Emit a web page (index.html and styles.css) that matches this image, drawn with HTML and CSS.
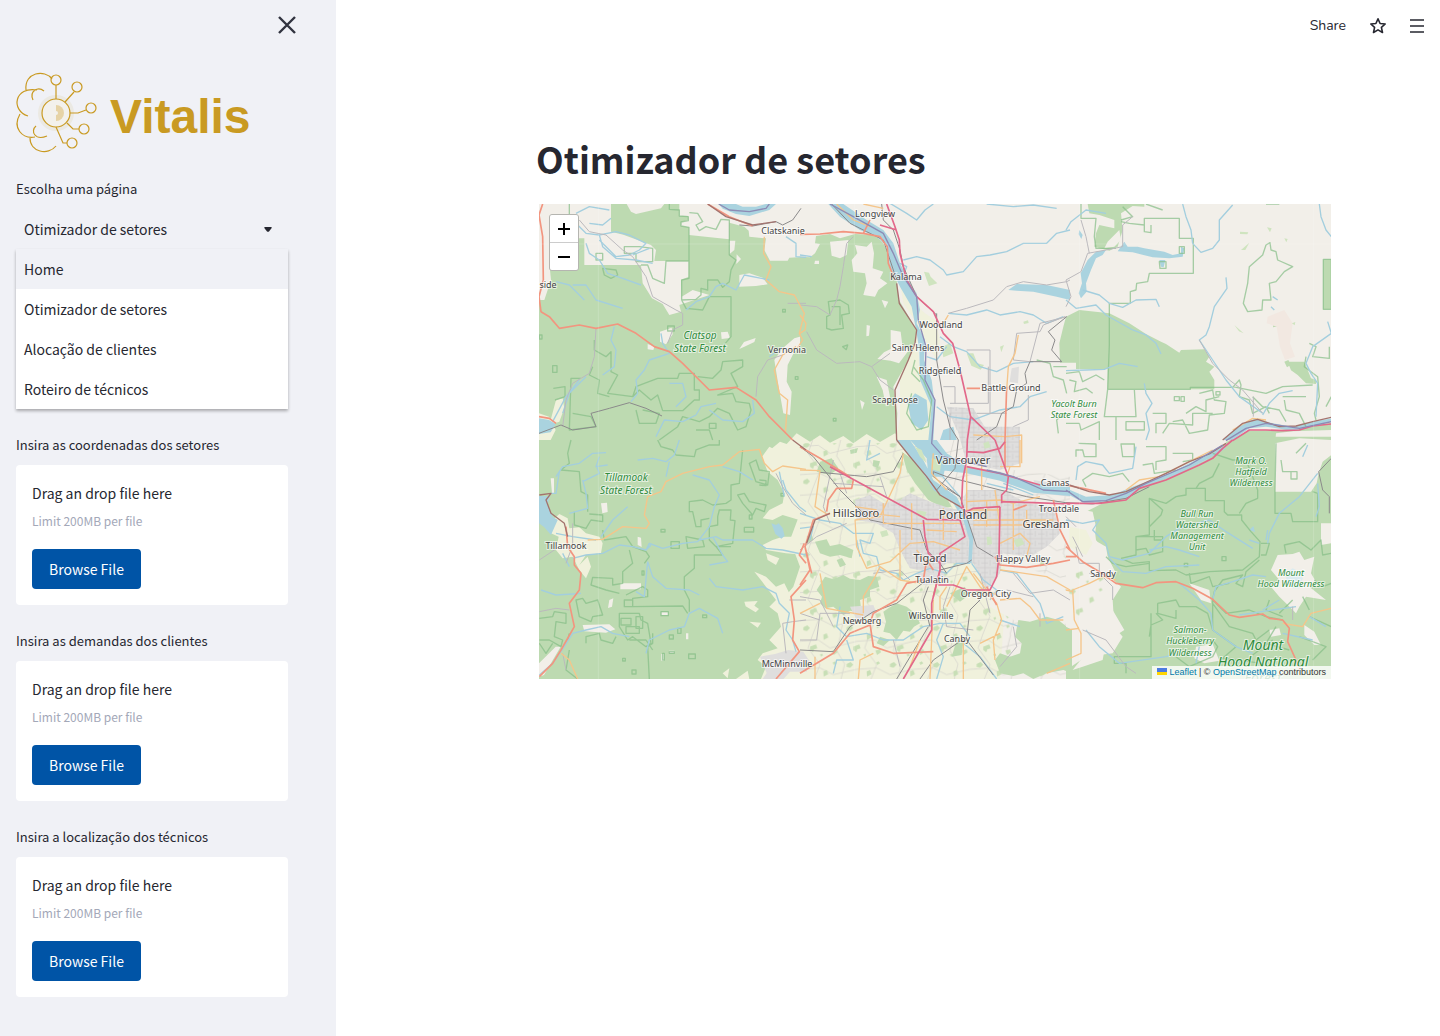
FILE: index.html
```html
<!DOCTYPE html>
<html lang="pt-BR">
<head>
<meta charset="utf-8">
<meta name="viewport" content="width=device-width, initial-scale=1">
<title>Vitalis – Otimizador de setores</title>
<link rel="stylesheet" href="styles.css">
</head>
<body>
<div class="app">
  <aside class="sidebar">
    <div class="sidebar-top">
      <button class="icon-button" type="button" aria-label="Fechar">
        <svg width="18" height="18" viewBox="0 0 18 18" fill="none" stroke="#31333f" stroke-width="2.400"><path d="M1 1 17 17M17 1 1 17"/></svg>
      </button>
    </div>
    <a class="brand" href="#">
      <svg class="brand-mark" viewBox="0 0 82 81" aria-hidden="true" fill="none" stroke="#c99a22" stroke-width="1.200">
        <circle cx="40" cy="41" r="18" fill="#ebe9e3" stroke="none"/>
        <circle cx="40" cy="41" r="14" fill="#f3f1ec"/>
        <path d="M40 33a8 8 0 0 1 0 16z" fill="#e6d3a6" stroke="none"/>
        <circle cx="40" cy="41" r="2" fill="#f3f1ec" stroke="none"/>
        <path d="M36 7C29-3 8 0 10 18M28 19c-6-5-15 0-11 9M21 18C-1 14-6 38 12 44M4 42C-4 56 6 67 19 65M20 54c-6 5-1 15 11 10M14 66c0 14 18 18 26 8M40 13v14M58 20 49 30M70 38l-8 3h-8M51 51l6 6h6M40 55l7 16h4"/>
        <circle cx="40" cy="8" r="5"/><circle cx="61" cy="15" r="5"/><circle cx="75" cy="36" r="5"/><circle cx="68" cy="57" r="5"/><circle cx="56" cy="71" r="5"/>
      </svg>
      <span class="brand-name">Vitalis</span>
    </a>

    <div class="field">
      <label class="label" for="page">Escolha uma página</label>
      <div class="picker">
        <div class="select-wrap">
          <select id="page" class="select">
            <option>Home</option><option selected>Otimizador de setores</option><option>Alocação de clientes</option><option>Roteiro de técnicos</option>
          </select>
          <svg class="caret" width="8" height="5" viewBox="0 0 8 5" aria-hidden="true"><path d="M1 0h6q1 0 .7 1L5 4.400Q4 5 3 4.400L.3 1Q0 0 1 0z" fill="#262730"/></svg>
        </div>
        <div class="menu">
          <button class="option option-active" type="button">Home</button>
          <button class="option" type="button">Otimizador de setores</button>
          <button class="option" type="button">Alocação de clientes</button>
          <button class="option" type="button">Roteiro de técnicos</button>
        </div>
      </div>
    </div>

    <section class="field">
      <h2 class="label">Insira as coordenadas dos setores</h2>
      <div class="card">
        <p class="card-title">Drag an drop file here</p>
        <p class="card-note">Limit 200MB per file</p>
        <button class="browse" type="button">Browse File</button>
      </div>
    </section>
    <section class="field">
      <h2 class="label">Insira as demandas dos clientes</h2>
      <div class="card">
        <p class="card-title">Drag an drop file here</p>
        <p class="card-note">Limit 200MB per file</p>
        <button class="browse" type="button">Browse File</button>
      </div>
    </section>
    <section class="field">
      <h2 class="label">Insira a localização dos técnicos</h2>
      <div class="card">
        <p class="card-title">Drag an drop file here</p>
        <p class="card-note">Limit 200MB per file</p>
        <button class="browse" type="button">Browse File</button>
      </div>
    </section>
  </aside>

  <main class="main">
    <header class="toolbar">
      <button class="share" type="button">Share</button>
      <button class="icon-button" type="button" aria-label="Favoritar">
        <svg width="18" height="18" viewBox="0 0 18 18" fill="none" stroke="#262730" stroke-width="1.600" stroke-linejoin="round"><path d="m9 1.800 2.100 4.700 5.100.5-3.800 3.400 1.100 5.100L9 12.900l-4.500 2.600 1.100-5.100L1.800 7l5.100-.5z"/></svg>
      </button>
      <button class="icon-button" type="button" aria-label="Menu">
        <svg width="14" height="14" viewBox="0 0 14 14" stroke="#262730" stroke-width="1.400"><path d="M0 1h14M0 7h14M0 13h14"/></svg>
      </button>
    </header>
    <div class="content">
      <h1 class="title">Otimizador de setores</h1>
      <div class="map">
        <svg class="map-canvas" viewBox="0 0 792 475" role="img" aria-label="Mapa de Portland e arredores">
          <defs>
            <pattern id="streets" width="34" height="29" patternUnits="userSpaceOnUse"><path d="M0 6h34M11 0v29M0 21h20M26 12v17" fill="none" stroke="#cbc9ca" stroke-width="2"/></pattern>
            <pattern id="lanes" width="170" height="146" patternUnits="userSpaceOnUse"><path d="M0 20 55 16 90 40 170 20M38 0 24 40 60 90 38 146M0 104l60-4 40 20 70-16M122 0l-12 48 24 40-14 58" fill="none" stroke="#d2d1cb" stroke-width="2"/></pattern>
            <pattern id="groves" width="130" height="110" patternUnits="userSpaceOnUse"><path d="M10 12l12-6 8 8-9 9-11-2zM70 34l10-4 5 12-14 8zM30 70l18-7 4 12-10 3-3 9-9-7zM96 82l14-4 3 9-12 8zM98 8l7-4 5 6-8 5zM60 94l6-3 3 5-6 4z" fill="#c8dfb6"/></pattern>
          </defs>
          <g transform="scale(.33333)">
            <!-- land cover -->
            <g transform="translate(783 708)"><path class="farm" d="M300-60 270 60 400 60 360-200 350-330 300-200z"/></g>
            <g transform="translate(-9 -12)">
              <path class="forest" d="M9 12H801V720H9z"/>
              <path class="land" d="M9 12H225V95L262 104 345 135 360 150 355 183H458V230L435 240 437 290 470 270 520 285 430 315 435 335 400 345 380 312 348 295 320 250 315 195H145V115H60V150L40 190 45 240 25 300 9 300z"/>
              <path class="land" d="M272 12H385L375 25 300 42 285 35zM430 12H580V118L459 105V82L435 78 436 66 457 60 456 48 430 48zM580 12H810V170L760 173 755 182 702 182 685 150 690 115 640 110 638 92 625 80 580 68zM580 122 598 122 595 150 580 163zM602 163l13 14-14 15zM610 225l30-5 40 13 15 20-35 5-50 2zM610 447l14-21 35-12-4 12-30 14zM555 397l20-2 7 19-25 3zM335 432l20 8-3 10-17-2zM372 395l35-12 3 20-20 30-18-8zM715 480l25-35 35-30 35-10v20l-35 30-20 40-3 50 15 30-5 70-20-5-14-80z"/>
              <path class="farm" d="M60 600l20-5 5 30-15 40-30 10zM9 640l30 10 20 40-15 30H9z"/>
              <path class="water-fill" d="M9 655l30 5 20 12-15 25-35 5zM548 12H720L700 30 640 48 600 42 560 26z"/>
              <path class="land" d="M600 12H690L660 20 620 20z"/>
            </g>
            <g transform="translate(783 -12)">
              <path class="forest" d="M0 170 30 172 45 160 60 132 45 130 48 108 90 102 120 115 165 102 225 105 250 130 265 160 270 200 290 240 297 300 350 390 345 425 325 480 280 560 292 640 287 740H0z"/>
              <path class="land" d="M165 135 200 140 215 125 222 160 218 205 250 215 240 235 262 250 235 270 225 290 190 285 200 250 195 220 160 215 155 180 172 160zM90 125l55-5-5 45-20 10-25-8zM272 390l30 5 5 40 20 15-30 40-25-8-40-5 20-20 20-10zM200 375l10 2-3 30-8 2zM245 300l20 5-10 20zM230 530l30 10 10 50-12 30-10-50zM180 600l14 8-8 22zM45 182l12 0 0 10-14 0z"/>
              <path class="farm" d="M300 250 340 310 375 340 405 360 420 420 410 480 380 430 350 370 310 310zM340 480 370 540 390 600 400 720 295 720 300 660 330 600z"/>
              <path class="grove" d="M372 215l15 3 5 12 20 20-25 8-8-22zM500 460l20 0 12 30 20 5-10 14-28-12zM600 440l12-5-8 22zM670 365l14-4 2 8-14 3zM425 440l25-10 10 30-30 12z"/>
              <path class="water-fill" d="M85 12 130 12 200 60 250 90 280 130 300 190 325 240 350 280 360 330 350 370 375 420 372 480 395 540 405 620 400 720 385 720 395 620 360 540 358 450 350 400 335 320 300 260 270 200 262 140 230 110 180 90 120 50zM345 580l35 20 5 60-20 30-30-20-12-60zM430 690l30-10 10 40h-50zM625 270 650 252 740 255 810 270 810 300 770 290 700 275 650 272z"/>
            </g>
            <g transform="translate(1581 -12)">
              <path class="forest" d="M-20 430-8 380 0 350 40 330 130 340 190 370 240 402 285 425 300 432 340 458 345 450 415 448 430 470 420 485 445 500 430 515 445 540V568H125V507H30V488L-18 488zM65 12H235V20L200 18 165 40 170 90 155 140 130 152 85 140 90 100 100 75 145 85 145 60 100 45 70 40zM772 178H796V328H772zM665 485l50 0 20 50 15 5 0 12-30-2-25-25-20-14zM622 372l17-4 2 10-20 4zM655 485l12-5 8 14-12 8z"/>
              <path class="peak" d="M605 350l50-20 25 40-8 60 15 40-30 10-15-40-10-60-30-10z"/>
              <path class="land" d="M160 90l5 30-20 20-30 5 10-20z"/>
              <path class="forest" d="M480 726 550 692 640 690 796 668V740H480z"/>
              <path class="land" d="M630 700 680 694 796 690V724H628z"/>
              <path class="water-fill" d="M470 720 520 675 570 655 620 670 680 680 740 665 796 655V665L740 680 680 692 600 680 550 685 500 720zM45 295 38 280 48 250 44 220 65 180 90 155 120 150 110 165 90 175 75 210 60 250 62 275zM175 125l10 15 30 0 20 5 60 10 25 10 25-5 0-20 10 5-5 25-40 5-50-3-60-15-45-3zM280 180l18 0-5 22-8-2zM40 90l10 15-4 12-8-14z"/>
              <path class="lime" d="M522 95l25 2-3 6-22-1zM525 150l25-22-12 22zM655 115l10 2-4 10zM603 82l14 3-5 12zM505 375l28 25-14-6zM678 370l10-4-2 10z"/>
            </g>
            <g transform="translate(-9 708)">
              <path class="forest" d="M9 0H801V717H9z"/>
              <path class="farm" d="M700 20 720 30 740 80 810 95V345L750 340 690 330 680 315 710 300 740 290 780 290 790 240 740 225 710 240 680 235 700 210 740 190 745 160 725 120 695 95 678 50zM655 395 690 410 720 440 745 430 760 460 780 440 810 420V717H675L690 680 665 660 680 640 725 625 700 600 735 560 725 520 700 500 720 480 690 440zM625 485l40-2-10 14 14 10-10 10-30-18zM690 340l40 15-10 20-25-15zM560 700l20-15-5 30zM600 717l35-25 5 25zM640 545l35 3-10 15zM50 240 70 222 95 235 100 265 130 262 150 280 190 290 200 310 195 340 150 345 130 375 155 350 165 380 150 415 130 390 110 350 80 355 60 330 68 290 45 280z"/>
              <path class="land" d="M44 115h10v45h-6zM195 190l18-2 2 28-16 4zM305 290l10 3 2 28-12-6zM253 430h62v18h-62zM220 480l12-5-4 25-12 4zM140 555l80-2 18 15-28 10-65-4zM376 642h8v20h-8zM399 632h16v6h-16zM450 580h7v18h-7zM376 517h20v8h-20zM9 670l50-50 15 0-50 85-15 5z"/>
              <path class="water-fill" d="M9 168H42L35 195 50 230 65 240 45 285 25 262 9 250zM706 250l14 5 8-5 12 14 6 24-10 8-18-14z"/>
            </g>
            <g transform="translate(783 708)">
              <path class="farm" d="M-90 30-60 5-40 12-10-20 30 5 60-14 90 8 130-12 160 10 200-18 240 6 285-20 350 30 430 150 560 220 620 400 600 720-30 720-10 640-60 600-20 540-70 500-20 440 0 380-30 300 0 220-40 180-10 110-70 90z"/>
              <path class="stone" d="M-120 650l45-8 40-12 45 5 20 30-10 30-50 0-30 34h-60l20-30z"/>
              <path class="lanes" d="M0 0H810V717H0z"/>
              <path class="groves" d="M0 10H300L400 180 300 230 0 150zM120 350H810V717H0V300z"/>
              <path class="land" d="M560 400l100-20 110 30 40 60v60l-150 20-90-50zM580 0h230v110L640 90z"/>
              <path class="forest" d="M305 35 345 62 370 100 400 145 440 175 455 200 430 205 385 180 345 130 320 90zM45 305 80 298 90 318 120 312 160 330 155 355 120 345 90 350 60 340zM75 410 100 418 130 405 150 416 180 420 205 408 230 410 238 440 210 450 210 470 180 480 185 520 150 512 130 525 100 500 76 505 60 490 66 470 50 450zM250 515 265 505 290 490 320 500 345 520 360 550 342 560 330 575 310 572 290 600 270 580 250 575 258 545zM655 540 690 545 740 530 775 540 800 560 816 566 816 700 790 690 740 700 700 717 670 700 640 708 600 700 585 660 600 640 630 650 660 640 665 610 645 590zM450 460l45-20 5 30-20 15zM60 65l35-10 20 30-25 20-40-10zM470 600l20 5-5 40-30 5zM20 290l14-10 6 20-16 8zM240 590l30 10-20 18-20-8zM110 360l16-6 12 20-18 8zM150 30l24-6-4 14-18 4zM220 60l20 4-6 20-16-6z"/>
              <path class="stone" d="M165 180 210 165 250 190 300 180 330 160 390 185 450 205 480 210 500 150 610 150 680 190 760 200 780 280 740 320 690 350 610 340 600 400 560 450 520 370 440 370 400 400 330 385 300 330 280 280 230 250 170 240zM470-40H660V70L600 90 500 70zM440-100 520-95 560-30 500 0 470-30zM150 500l70-5 10 25-60 20zM350 400l80-10 10 40-70 5zM635-215l22-5-3 50-25-5zM700 120l60 10 50 20v20l-90-10z"/>
              <path class="streets" d="M165 180 210 165 250 190 300 180 330 160 390 185 450 205 480 210 500 150 610 150 680 190 760 200 780 280 740 320 690 350 610 340 600 400 560 450 520 370 440 370 400 400 330 385 300 330 280 280 230 250 170 240zM470-40H660V70L600 90 500 70zM440-100 520-95 560-30 500 0 470-30z"/>
              <path class="grove" d="M240 275l20-5 6 16-20 6zM350 210l30 6-6 16-24-4zM640 300l24-6 10 18-24 10zM560 290l14 0 2 22-14 4zM700 240l22-4 0 16-20 4zM550 10l16-6 6 18-18 4z"/>
              <path class="water-fill" d="M290 0 330 0 370 60 400 120 470 170 500 230 520 290 515 370 505 368 508 300 490 240 460 190 400 150 370 100zM330 0 410 0 440 40 500 80 600 95 700 130 810 140V168L700 158 600 122 500 100 420 90 385 60zM380 50 440 60 430 110 385 110z"/>
              <path class="grove" d="M395 55 425 62 420 95 395 88zM345 20 365 30 380 70 360 50z"/>
            </g>
            <g transform="translate(1581 708)">
              <path class="forest" d="M480 10 550-10H796V717H0V690L60 650 140 640 170 590 145 560 140 480 165 440 120 400 125 350 90 300 80 220 60 215 200 145 260 125 320 105 420 60z"/>
              <path class="land" d="M627 10 700-5 796 0V45L770 65 758 100 752 130 735 155H627zM0 200 80 215 90 260 85 300 120 320 125 350 150 400 110 412 80 430 60 450 80 500 140 510 175 570 120 605 110 660 50 680 20 690 60 640 50 600 20 570 0 560zM635 345 680 342 700 335 715 360 745 350 735 400 750 425 730 440 780 480 720 470 700 500 690 520 660 490 640 470 615 440 640 420 615 390zM765 250l30 0 0 60-30 5zM610 570l30-5 5 20-30 5zM715 555l30 20 20 40-20 0-30-30zM390 620l50-8 20 50-45 8-30-15zM370 430l60 20 5 40-30-10z"/>
              <path class="farm" d="M10 260 60 270 80 310 60 345 10 320z"/>
              <path class="groves" d="M0 390H170L100 500 0 560z"/>
              <path class="snow" d="M660 400l20-15 20 10 10 20-10 30-20 0-20-20z"/>
              <path class="water-fill" d="M0 145 60 170 140 165 200 140 300 105 400 55 470 15 480 25 420 60 330 105 230 140 180 175 60 192 0 160zM550 270l12-12 5 18z"/>
            </g>

            <!-- protected-area outlines -->
            <g class="bound">
              <g transform="translate(-9 -12)"><path d="M400 12V28L430 30V48L457 50V62L435 66V78L459 82V235L437 240V300L480 298 495 285V265L515 270V240H545L560 262 580 245 585 210 600 180 580 165V60L555 58 540 88 510 80 490 92 480 75 500 65 485 40 460 38M459 183H390L385 250 350 235 335 195H315M265 140H310L350 145V185H300V160H265zM437 300 450 325 500 330 520 290H585V410L560 440 520 450M200 205l40 5 5 15-20 10-20-10zM180 160h20v20h-20zM175 420V450L210 470 225 455V515L245 525 215 580 290 590 300 560 325 550 365 535 425 535 430 520H475V570H490V600H475L440 632H380L365 585 345 600 310 570 290 590M485 530 530 535 555 510 560 485 620 480V500L585 520 605 560 545 585 590 580 600 605 640 610 645 630 630 680 605 690 580 640 545 625 520 650 490 665 440 650 425 680 370 720M170 500 160 525 190 540 185 580 220 590M50 497h13v20h-13zM52 565l35-5v30l-30 10M135 535H105L100 690 180 680 165 650 110 640M395 378l20 0 0 15-20 0zM300 630l10 40 50 0 10-30-50-10M480 690h40l10 30M100 12v60l20 30-40 10M520 670h20v15h-20zM740 328h8v8h-8zM778 530h8v8h-8zM10 405h8v12h-8z"/></g>
              <g transform="translate(783 -12)"><path d="M85 305 120 300 145 315 148 340 125 345 130 385 95 390 80 385V350L90 345zM95 320H120V375M128 440l15-5-4 14zM100 655l8 0 0 8-8 0zM340 500 370 540 395 600 385 680 350 690 320 640 335 580M345 480 335 520 360 545M710 480 750 490 760 530 790 540 800 580M760 500H800M790 640 770 660 775 700"/></g>
              <g transform="translate(1581 -12)"><path d="M45 12V55H90L85 110 90 145H150M165 65 190 70 235 75V55H340V115H382V220H250L245 245 212 250 210 270 193 275V310H130V435L125 568H373V562H500L520 540 525 555 520 590 550 600 560 640 600 620 610 640M235 75 235 95 255 98V75M340 140h15v20h-15zM280 185l20 0 0 20-18 0zM600 135 612 128 615 150 630 155 635 180 680 200 655 215 630 245 610 250 615 300 590 300 588 330 545 335 532 310 545 250 550 200 590 165zM125 568 115 650H210L205 568M0 520 40 515 50 545 90 525 115 540M10 540 30 545 25 575 60 565 80 580M0 670H40L45 690 100 665V720M180 665h55v25h-55zM150 650v70M325 590h15v12h-15zM345 590h10v14h-10zM260 640h40v30h-30v30M290 700l20-30 70 5V640H440M360 640l30-20 30 15V600L460 590M400 580 440 570 445 600 480 605 475 640 430 645 425 690 370 700 350 660 320 665M450 575h12v10h-12zM500 560 600 580 650 560 740 555M650 590H720M655 600 660 630 700 640 720 680M730 430 750 440 740 470 790 475V440M720 470 715 500 755 530 760 590 745 640 750 660M560 590 590 620 640 630 660 665M240 12 290 30M170 20 200 50 165 60M772 178H796V328H772zM600 12H640M780 620 796 590"/></g>
              <g transform="translate(-9 708)"><path d="M105 0 95 40 100 70 75 90 130 95 135 155 155 165V215M365 0 375 20 410 30 420 45 475 50 480 30 520 15 550 15V0M620 30 610 130 585 135V180L570 190 530 195 500 180 460 185V215H470L480 260H495V240L520 235M545 230 550 210H585L583 240 597 242 590 310 540 320 520 300V260L545 255zM605 165 625 160 640 185 690 195 685 215 660 205 650 225 620 190zM640 225h8v12h-8zM625 262h28v14h-28zM640 70 660 60 670 90 700 95 695 135 660 125zM585 320H540L560 345H475V385L445 410V450L460 480V515M405 305h25v20h-25zM450 290 500 300 505 320 455 325zM115 215V255L150 265 165 240 200 245V225L160 222M200 270 205 300 270 290 290 320 330 335 340 350 325 370M280 330 290 370 260 395V430L230 435V415L170 412 165 435 210 450 250 460M270 465 320 440 335 450V470L290 475V500L440 498 455 520M375 515h22v12h-22zM265 480h25v20h-25zM120 480 140 475 150 490 185 480 200 525 170 530 165 545 130 530zM250 520H310L315 540 335 550 345 610 330 620 290 590 275 600 250 560zM255 535h30v20h-30zM270 560h40v20h-40zM300 530h20v35h-20zM280 600H330L350 630M350 580V610L335 620 340 717M240 590 230 610 195 600 190 580 150 590V610M100 580 95 600M10 535 50 530 55 515 90 520V550L60 545 55 590 80 600 75 620 40 600H10M10 610 30 640 50 610M380 640h5v20h-5zM400 635h15v5h-15zM458 642h20v14h-20zM500 525h12v8h-12zM288 690h12v12h-12zM260 655h8v8h-8zM318 393h6v12h-6zM400 585h12v12h-12zM735 160h8v8h-8zM670 120l20 2 0 15-20-2M100 630 90 690 125 717M425 565h10v15h-10zM375 268h12v8h-12z"/></g>
              <g transform="translate(1581 708)"><path d="M38 10 90 12V50H55L50 30H30V50M165 12H205V50H170zM240 20H300V60L270 65V90M230 75 260 70 265 100 330 90M320 40H380V60L350 65M60 140 50 120 80 100 130 110 170 100 190 125M165 355 210 345V290L250 285V175L290 210 285 225 250 260M250 175 300 190 330 170 360 165V145H418V182H475V215L485 225H527V240L555 275 582 305 580 350 530 390 430 395 360 405 330 390 250 392V365L200 370 165 355M210 290H290V335L250 345 240 325 210 330M290 300H265V270M355 370h10v10h-10zM468 350h12v12h-12zM630 10 627 150V220H675L680 245H755V160L740 155M645 60 650 95H675M675 95h18v22h-18zM690 40 720 10M520 220 540 190 575 175V150L560 110 540 60 500 60 440 40M460 70 440 110 400 130 390 145M660 340 655 315 700 305 735 330 765 300 770 345 796 340M585 345H600L610 310H585M580 360 540 395 530 440 510 430 530 405 470 420 445 455 440 480 480 520 550 510 600 530 650 540M370 400 375 430 430 410 440 440 490 430M440 480V570L510 620 470 655 590 670M440 490 490 560 560 580 570 600 610 570M275 490 330 480 340 500 390 500 425 520 440 570M275 490V520L330 535V510M255 520V650H145V670H180V700M250 590 255 555 290 540 270 520M330 650 370 680 440 650 455 620 440 600M610 480 600 510 650 530M730 530 796 560M680 480 640 520M710 470 730 510M630 560 600 610 670 630M700 590 780 620 740 660M120 350 140 370 180 380 250 370M560 645 620 600M745 420 770 440 796 430"/></g>
            </g>

            <!-- rivers -->
            <g class="river">
              <g transform="translate(-9 -12)"><path d="M120 70 150 100 190 105 240 95 280 105 330 130 310 150 280 165 240 170 190 120M150 130 160 160 190 180 215 220 260 235 315 255M190 105 200 140 240 175 300 180 350 190M290 165 340 145M60 245 100 255 145 300M110 255 150 255 180 300 260 325M160 70 200 75 225 55M120 40l40-20 60 10M750 110 780 130V170L810 172M450 330 480 305 520 290 540 260 560 250 600 270 625 225 700 240M375 400 380 430 400 460 340 480 325 510 300 540 305 580 285 605M235 380 225 420 240 450 235 500 200 525M400 550 440 550 450 590 420 620M360 710 385 660 440 665 480 645 495 620 540 610M520 630 560 660 620 665 655 640 650 600M80 640 100 580 150 530M50 665 90 590 130 540M700 470 740 440"/></g>
              <g transform="translate(783 -12)"><path d="M270 10 320 40 350 60 375 30 400 12M310 180 350 170 390 180 430 210 440 225 490 215 530 170 570 165 620 155 670 130 740 130 770 100 810 90M560 12 640 20 700 15 770 25M445 340 500 345 560 330 600 345 660 335 700 345 740 370 790 350M420 410 460 440 500 455 540 500 590 515 640 490 700 485M410 620 450 650 520 660 600 630 660 620 690 590 740 575M380 470 410 480 440 440M300 190 320 200 305 240M0 165 35 170"/></g>
              <g transform="translate(1581 -12)"><path d="M0 90 15 65 60 30 120 40M350 12 360 50 375 90 380 130 405 157 440 145 460 120V60L500 15M760 12 765 50 780 90 796 110M50 270 100 285 130 310 170 322 210 300 270 298 280 320M0 300 30 325 90 315 120 345 200 390 240 405 270 430 285 462M480 232 483 265 445 320 430 380 420 405 400 420 440 480 480 540 520 590 590 640M0 512 60 510 115 508 160 490 215 500M235 550 240 580 258 610 240 640 250 690 240 720M590 645 610 610 640 580 680 572M796 400 740 440 720 490 735 520 755 550 750 650M785 365 796 400M620 290 635 300M615 320 625 330"/></g>
              <g transform="translate(-9 708)"><path d="M60 110 80 80 130 70 170 40 210 38M70 95 60 160 45 160M190 50 180 80 215 75M140 120 150 160 155 205 100 220M180 75 190 100 140 125M305 60 350 55 390 65 415 45 430 0M400 65 390 110M470 105 520 120 550 165 535 200 520 260 485 305 440 310 380 325 340 310 330 330 290 320 250 315 200 340 150 345 110 355M560 80 610 95 650 120M490 300 540 290 560 300 650 300 690 325 740 330 810 345M530 290 560 345 575 365 520 375M335 365 325 470 300 455M335 365 350 410 390 445 460 450 490 465M520 415 540 440 620 450 680 440 720 460 730 490 760 520 750 570 770 600 780 635M560 580 545 535 490 505 460 520 445 560 400 570 340 600 330 640M280 590 230 580 195 560 150 570 110 580 85 620 50 670 10 705M15 450 60 465 110 462 135 460M60 280 110 290 180 300M80 340 100 380M740 120 750 150 790 200 810 215M275 200 230 240 195 290M330 330 345 315M730 95 745 170"/></g>
              <g transform="translate(783 708)"><path d="M0 220 60 240 120 250 160 280 220 280 210 310 180 300 190 340 230 350 240 390 290 400 310 420 350 400 390 385 440 400 470 370 510 370M0 265 40 260 30 300M560 130 640 150M515 370 550 420 590 450 570 480M600 390 650 400 680 440 720 490 740 550 790 530M120 500 110 560 140 590 200 580 250 600 310 600 370 560 420 550 480 550 510 590M140 600 160 660 110 660 100 700M430 550 410 600 430 650 410 717M490 610 540 650 590 717M610 130 700 165M180 350 170 300M210 0 200 60 240 40M420 100 480 170M600 540 660 560"/></g>
              <g transform="translate(1581 708)"><path d="M30 120 35 80 60 65 110 75 130 100 200 85 210 20M0 240 50 250 100 240 80 270 120 310 130 350 170 360 250 340 300 290 340 265 430 240 480 275 560 325M250 330 300 320 340 330 400 350M130 355 170 395 240 400 300 380 400 375M340 430 400 480 435 520 440 570M440 480 450 440 500 425 560 405 600 410M755 130 760 200 750 230M605 310 610 280 640 220 700 170 755 100M550 300 580 310M710 50 725 15M60 570 100 620 160 670 300 650 330 640M440 570 510 620 560 640M690 500 620 510 520 525M590 510 640 480M600 300l5-30M650 580 740 600M400 620 390 670M730 530 780 560"/></g>
            </g>

            <!-- railways and minor roads -->
            <g class="minor">
              <g transform="translate(-9 -12)"><path d="M130 60 160 95 210 105 260 150 290 170 330 230 350 290 420 330 440 340 440 375 410 390 395 430M180 385 175 470 160 520 110 550 90 600 80 680M660 590 665 530 695 480 740 465 780 440M755 310H810"/></g>
              <g transform="translate(783 -12)"><path d="M160 110 140 130 130 200 120 260 110 300 90 345 50 320 0 315M20 395 50 450 110 490 180 485 215 500 270 460M215 500 240 540 280 570M445 340 500 325 580 300 620 260 670 245 740 255 800 245 810 240M795 350 730 375 720 395 650 400 640 480 690 485 720 370 800 350M500 450H570V640M565 500V610H450M430 560H465V610M685 585V660L640 680M530 640H620M450 640V720"/></g>
              <g transform="translate(1581 -12)"><path d="M0 320 15 290 0 240 45 215 65 160 120 150 170 140M200 50 170 75V140M45 60 60 110 70 160M400 420 440 490 490 540 530 570 590 640M562 590V650"/></g>
              <g transform="translate(-9 708)"><path d="M10 515 60 505 100 510M90 690 80 640M110 250V320M10 360 70 320M740 550 750 640M740 550 770 545 810 540M720 100 740 140 770 190 810 225M105 330 90 370M760 480H810"/></g>
              <g transform="translate(783 708)"><path d="M0 470 60 480 100 560M0 600H50L60 520 150 520M220 400 300 390 330 420M450 440 430 500 440 560 520 570M640 560 650 620 600 680M0 520 60 540M540 400 570 520M280 600 300 680M640 400 690 460 760 450 810 480M100 130 250 140M100 60 70 200 90 250M0 330 50 290 140 250M720 520V560M620 450 700 470M240 110 260 170M120 100 140 160"/></g>
              <g transform="translate(1581 708)"><path d="M30 320 40 370 100 370 100 410 70 400M50 350 20 290M140 480V440L110 410M50 570 120 600 180 680 210 700M0 230 30 260M680 540 680 500"/></g>
            </g>
            <g class="rail">
              <g transform="translate(-9 -12)"><path d="M9 700 75 675 110 690 180 680 165 640 220 625 280 608 330 625 378 648M795 25 770 60 740 75 720 65 650 78 610 75"/></g>
              <g transform="translate(783 -12)"><path d="M95 12 150 70 200 95 250 120 270 180 290 240M410 340V480L430 600 450 680 475 720M245 12 250 60 280 90 300 150 310 200 350 290 410 345M785 485 755 450 765 420 745 395 800 350M785 485 690 485 675 520 680 550 650 570 640 620 605 640 590 680 530 720"/></g>
              <g transform="translate(783 708)"><path d="M0 20 40 50 120 150 210 240 360 270 380 330 420 370 440 400M60 97 200 110 280 95 310 40M400 95 440 110 560 140 680 170 810 190M475 0 465 85 410 150M440 145 480 170 500 230 530 320 580 350M400 95 400 110 480 170M385 560 290 717M0 630 100 635 150 560 220 515 290 490 380 420M500 600 580 705M385 440 370 480 390 560M540 480 510 510 500 590 400 660 360 717M420 390 500 370 515 360"/></g>
              <g transform="translate(1581 708)"><path d="M0 188 80 192 180 175 250 140M796 55 758 95 770 150 790 170V220"/></g>
            </g>

            <!-- roads -->
            <g class="secondary">
              <g transform="translate(-9 -12)"><path d="M685 110 683 160 705 200 690 240 730 275 775 285 805 340 790 400 800 420 780 450M780 440 740 465 715 510 730 580 755 600 748 700"/></g>
              <g transform="translate(783 -12)"><path d="M110 12 160 60 210 80M190 12 250 25M0 345 18 370 15 390 0 400M655 405 645 460 625 500 620 570M430 370 445 345M520 705 615 710 665 705V790"/></g>
              <g transform="translate(1581 -12)"><path d="M500 690 560 655 600 660"/></g>
              <g transform="translate(-9 708)"><path d="M155 300 200 298 260 260 330 265 340 250 325 225 335 170 375 155 390 125 440 100 520 80 560 75 610 35 670 28 685 70 710 95 740 78 810 88M75 640 100 660 125 717"/></g>
              <g transform="translate(783 708)"><path d="M0 90 60 92 45 200 80 222M310 40 300 100 240 230 165 240 170 320 200 385 270 365 330 310 400 305 480 330M165 200 230 210M250 250H480M300 270V420L240 380 220 420 190 470V520M300 420 360 430M60 400 80 505 190 525M500 80V210H600M545 60V150M585 150 600 260M500 185 600 180 640 190 720 170M520 240H760M520 255H750M560 180V260M680 210V260M600 310 660 280 690 310 680 350M600 80H660V0M620 110 630 80M400 480 390 717M440 500 500 380 540 440 590 490 605 540 580 600 585 660M420 510V470L440 440M330 680 360 600M175 717 180 660 220 640M490 600V717M600 480 660 475 690 500 720 540 790 540M600 390 640 395 740 410 810 450M45 650V717M400 40 395 100 440 150M0 520 60 490M540 610 600 580M740 700 810 670M350 330 380 370M520 400 560 450 600 470M335 190V300M250 190V250M210 220 300 230M380 270 470 275M430 205V300M640 190V330"/></g>
              <g transform="translate(1581 708)"><path d="M150 420 110 410 70 430 20 450 25 540 45 580V640L0 660M0 450 20 455M0 570 40 565M180 150 220 120 280 110 370 65 440 30M650 550 710 560 735 520 796 505"/></g>
            </g>
            <g class="trunk">
              <g transform="translate(-9 -12)"><path d="M20 12 9 45 20 110 22 240 9 290 15 335 40 350 70 385 130 375 180 385 245 372 300 400 355 440 400 455 440 490 520 570 600 562 660 600 700 650 770 720M9 650 40 655 60 670M515 12 580 50 650 78"/></g>
              <g transform="translate(783 -12)"><path d="M0 103 60 102 130 95 190 100 240 110 262 140 265 190 285 240M190 100 210 60M500 565H540M620 560 615 720"/></g>
              <g transform="translate(-9 708)"><path d="M90 260 95 320 115 350V375L135 400 130 450 100 490 115 560 75 630 50 670 10 710M810 420 765 470 775 540 770 600 790 635 720 717M805 310 790 345 810 370"/></g>
              <g transform="translate(783 708)"><path d="M0 20 60 55 150 110M160 120 155 145 110 145 85 180 80 215M0 435 30 390 15 320 40 240 90 220M15 320 35 400M400 390 380 360 370 420 320 430 290 480 220 520 210 550 220 620 280 640 400 635M0 700 100 640 150 580 210 555M585 350 600 375 680 382 760 370 810 360M560 440 590 495M760 180 780 270 810 330M615 0V80M400 470 420 390M640 210 680 195"/></g>
              <g transform="translate(1581 708)"><path d="M0 320 50 365 100 395 150 430 230 443 270 428 330 425 380 445 440 478 490 525 520 532 590 522 610 535 650 540 670 565 665 605 690 660 700 690M0 135 50 145 120 160M0 350 30 350"/></g>
            </g>
            <g class="dark">
              <g transform="translate(-9 -12)"><path d="M515 12 570 50 650 75 720 65"/></g>
              <g transform="translate(783 -12)"><path d="M290 250 298 310 350 390 345 430 325 480 285 570 290 720"/></g>
              <g transform="translate(-9 708)"><path d="M10 165 45 160 30 180 45 220 85 250 95 290M770 0 810 30"/></g>
              <g transform="translate(783 708)"><path d="M290 0 330 50 380 110 420 165 480 200M90 220 45 240 20 310"/></g>
              <g transform="translate(1581 -12)"><path d="M470 720 530 670 575 658 640 680 690 678 740 665 796 652"/></g>
              <g transform="translate(1581 708)"><path d="M10 135 70 155 130 165 180 155 300 100 370 65 430 42 480 10"/></g>
            </g>
            <g class="motorway">
              <g transform="translate(783 -12)"><path d="M260 12 285 80 298 120 300 160 320 240 350 290 400 335 430 400 458 430 480 510 512 650 585 720M512 650 502 720M240 75 290 90"/></g>
              <g transform="translate(783 708)"><path d="M90 80 380 238 480 240 495 290 420 340 420 390 395 490V570L310 717M502 0 500 60 488 120 485 190 500 235M585 0 625 110 620 150 605 165V190M500 80 600 100 720 135M500 35 550 38 600 25 615 5M415 435 460 435 500 450 570 450 590 410 597 350 600 200M370 240 375 290 385 340 420 370M605 185 700 188 810 192M480 200 500 215 520 205 600 200"/></g>
              <g transform="translate(1581 -12)"><path d="M500 722 550 690 600 690 650 692 700 690 740 678 796 672"/></g>
              <g transform="translate(1581 708)"><path d="M0 190 100 190 180 180 220 145 300 120 400 75 440 55 470 25 500 0"/></g>
            </g>
            <g class="border">
              <g transform="translate(-9 -12)"><path d="M548 12 580 30 640 35 690 25 700 12"/></g>
              <g transform="translate(783 -12)"><path d="M90 12 160 50 250 100 280 160 310 230 350 290 355 360 378 440 375 540 405 600 395 730 430 770 560 800"/></g>
              <g transform="translate(783 708)"><path d="M560 90 640 110 730 150 810 155"/></g>
              <g transform="translate(1581 708)"><path d="M0 150 50 185 120 182 180 160 240 130 370 75 470 15"/></g>
              <g transform="translate(1581 -12)"><path d="M480 722 540 685 600 670 700 685 796 665"/></g>
            </g>
            <path class="tile-seam" d="M0 120H2376M178 0V1425M1622 0V1425M2324 0V1425M946 0V1425"/>
          </g>

          <!-- place names -->
          <g class="town">
            <text x="336" y="13">Longview</text><text x="244" y="30">Clatskanie</text><text x="367" y="76">Kalama</text><text x="402" y="124">Woodland</text><text x="379" y="147">Saint Helens</text><text x="401" y="170">Ridgefield</text><text x="472" y="187">Battle Ground</text><text x="356" y="199">Scappoose</text><text x="248" y="149">Vernonia</text><text x="9" y="84">side</text><text x="27" y="345">Tillamook</text><text x="516" y="282">Camas</text><text x="520" y="308">Troutdale</text><text x="484" y="358">Happy Valley</text><text x="393" y="379">Tualatin</text><text x="447" y="393">Oregon City</text><text x="564" y="373">Sandy</text><text x="392" y="415">Wilsonville</text><text x="323" y="420">Newberg</text><text x="418" y="438">Canby</text><text x="248" y="463">McMinnville</text>
          </g>
          <g class="city"><text x="424" y="260">Vancouver</text><text x="317" y="313">Hillsboro</text><text x="507" y="324">Gresham</text><text x="391" y="358">Tigard</text></g>
          <g class="metro"><text x="424" y="315">Portland</text></g>
          <g class="park"><text x="161" y="135">Clatsop</text><text x="161" y="148">State Forest</text><text x="87" y="277">Tillamook</text><text x="87" y="290">State Forest</text></g>
          <g class="park park-small"><text x="535" y="203">Yacolt Burn</text><text x="535" y="214">State Forest</text><text x="712" y="260">Mark O.</text><text x="712" y="271">Hatfield</text><text x="712" y="282">Wilderness</text><text x="658" y="313">Bull Run</text><text x="658" y="324">Watershed</text><text x="658" y="335">Management</text><text x="658" y="346">Unit</text><text x="752" y="372">Mount</text><text x="752" y="383">Hood Wilderness</text><text x="651" y="429">Salmon-</text><text x="651" y="440">Huckleberry</text><text x="651" y="452">Wilderness</text></g>
          <g class="park park-large"><text x="724" y="446">Mount</text><text x="724" y="463">Hood National</text><text x="724" y="479">Forest</text></g>
        </svg>
        <div class="zoom">
          <button class="zoom-button" type="button" aria-label="Aproximar"><svg width="12" height="12" viewBox="0 0 12 12" stroke="#000" stroke-width="2"><path d="M0 6h12M6 0v12"/></svg></button>
          <button class="zoom-button" type="button" aria-label="Afastar"><svg width="12" height="12" viewBox="0 0 12 12" stroke="#000" stroke-width="2"><path d="M0 6h12"/></svg></button>
        </div>
        <div class="credits"><svg width="10" height="7" viewBox="0 0 10 7" aria-hidden="true"><path fill="#4c7be1" d="M0 0h10v4H0z"/><path fill="#ffd500" d="M0 4h10v3H0z"/></svg> <a href="#">Leaflet</a> | © <a href="#">OpenStreetMap</a> contributors</div>
      </div>
    </div>
  </main>
</div>
</body>
</html>
```
FILE: styles.css
```css
* { box-sizing: border-box; }
body { margin: 0; background: #fff; color: #262730; font-family: "Noto Sans CJK SC", "Noto Sans", sans-serif; font-size: 14px; line-height: 20px; }
button, select { font: inherit; color: inherit; border: 0; background: none; padding: 0; margin: 0; }
h1, h2, p { margin: 0; }
svg { display: block; }

.app { display: flex; min-height: 100vh; }

.sidebar { flex: 0 0 336px; display: flex; flex-direction: column; gap: 26px; padding: 0 48px 39px 16px; background: #f0f1f6; }
.sidebar-top { display: flex; justify-content: flex-end; align-items: center; height: 50px; margin: 0 -8px -4px 0; }
.icon-button { display: flex; align-items: center; justify-content: center; }

.brand { display: flex; align-items: center; gap: 12px; text-decoration: none; color: #c99a22; }
.brand-mark { width: 82px; height: 81px; overflow: visible; }
.brand-name { font: 700 48px/72px "Liberation Sans", Arial, sans-serif; padding-top: 8px; }

.field { display: flex; flex-direction: column; gap: 10px; }
.label { font-size: 13px; font-weight: 400; line-height: 20px; }
.select-wrap { position: relative; }
.select { width: 100%; height: 40px; padding: 0 8px; appearance: none; }
.caret { position: absolute; right: 16px; top: 18px; pointer-events: none; }
.menu { display: flex; flex-direction: column; background: #fff; box-shadow: 0 2px 3px rgba(0, 0, 0, .3); }
.option { height: 40px; padding: 0 8px; text-align: left; }
.option-active { background: #f0f1f6; }

.card { display: flex; flex-direction: column; align-items: flex-start; padding: 16px; background: #fff; border-radius: 4px; }
.card-title { line-height: 24px; margin-bottom: 6px; }
.card-note { font-size: 12px; color: #a3a8b8; margin-bottom: 18px; }
.browse { height: 40px; padding: 0 17px; border-radius: 4px; background: #0054a6; color: #fff; }

.main { flex: 1; min-width: 0; }
.toolbar { display: flex; justify-content: flex-end; align-items: center; gap: 23px; height: 51px; padding-right: 16px; }
.share { font: 400 14px/20px "Nunito", "Noto Sans", sans-serif; }
.content { padding: 77px 109px 40px 200px; }
.title { font-size: 36px; font-weight: 700; line-height: 60px; }

.map { position: relative; margin: 16px 0 0 3px; overflow: hidden; background: #f2efe9; }
.map-canvas { width: 100%; height: auto; }
.zoom { position: absolute; left: 10px; top: 10px; display: flex; flex-direction: column; gap: 1px; background: #ccc; border: 1px solid #b5b5b0; border-radius: 3px; overflow: hidden; }
.zoom-button { display: flex; align-items: center; justify-content: center; width: 28px; height: 27px; background: #fff; }
.credits { position: absolute; right: 0; bottom: 0; padding: 0 5px; background: rgba(255, 255, 255, .8); color: #333; font: 9px/13px "Liberation Sans", Arial, sans-serif; }
.credits svg { display: inline-block; }
.credits a { color: #0078a8; text-decoration: none; }

.forest { fill: #bddab1; }
.land { fill: #f2efe9; }
.farm { fill: #f0f1dc; }
.stone { fill: #dfdedd; }
.peak { fill: #f2e8e1; }
.snow { fill: #dcecf0; }
.grove, .lime { fill: #cfe4bf; }
.water-fill { fill: #aad3df; }
.streets { fill: url(#streets); }
.lanes { fill: url(#lanes); }
.groves { fill: url(#groves); }
.bound, .river, .minor, .rail, .secondary, .trunk, .dark, .motorway, .border, .tile-seam { fill: none; stroke-linejoin: round; stroke-width: 4px; }
.bound { stroke: #84bd86; stroke-opacity: .7; }
.river { stroke: #a3cede; }
.minor { stroke: #bbb9bd; stroke-width: 3px; }
.rail { stroke: #8b8a8b; stroke-width: 3px; }
.secondary { stroke: #f5c58a; }
.trunk { stroke: #f2957f; stroke-width: 5px; }
.dark { stroke: #a3736e; }
.motorway { stroke: #e2688a; stroke-width: 5px; }
.border { stroke: #8d8bb5; }
.tile-seam { stroke: #fff; stroke-opacity: .25; stroke-width: 2px; }
.town, .city, .metro, .park { text-anchor: middle; font-family: "Noto Sans", sans-serif; paint-order: stroke; stroke: rgba(255, 255, 255, .6); stroke-width: 2px; }
.town { font-size: 9px; fill: #444; }
.city { font-size: 11px; fill: #444; }
.metro { font-size: 12px; fill: #444; }
.park { font-size: 10px; font-style: italic; fill: #2f8c3d; }
.park-small { font-size: 9px; }
.park-large { font-size: 14px; }
```
